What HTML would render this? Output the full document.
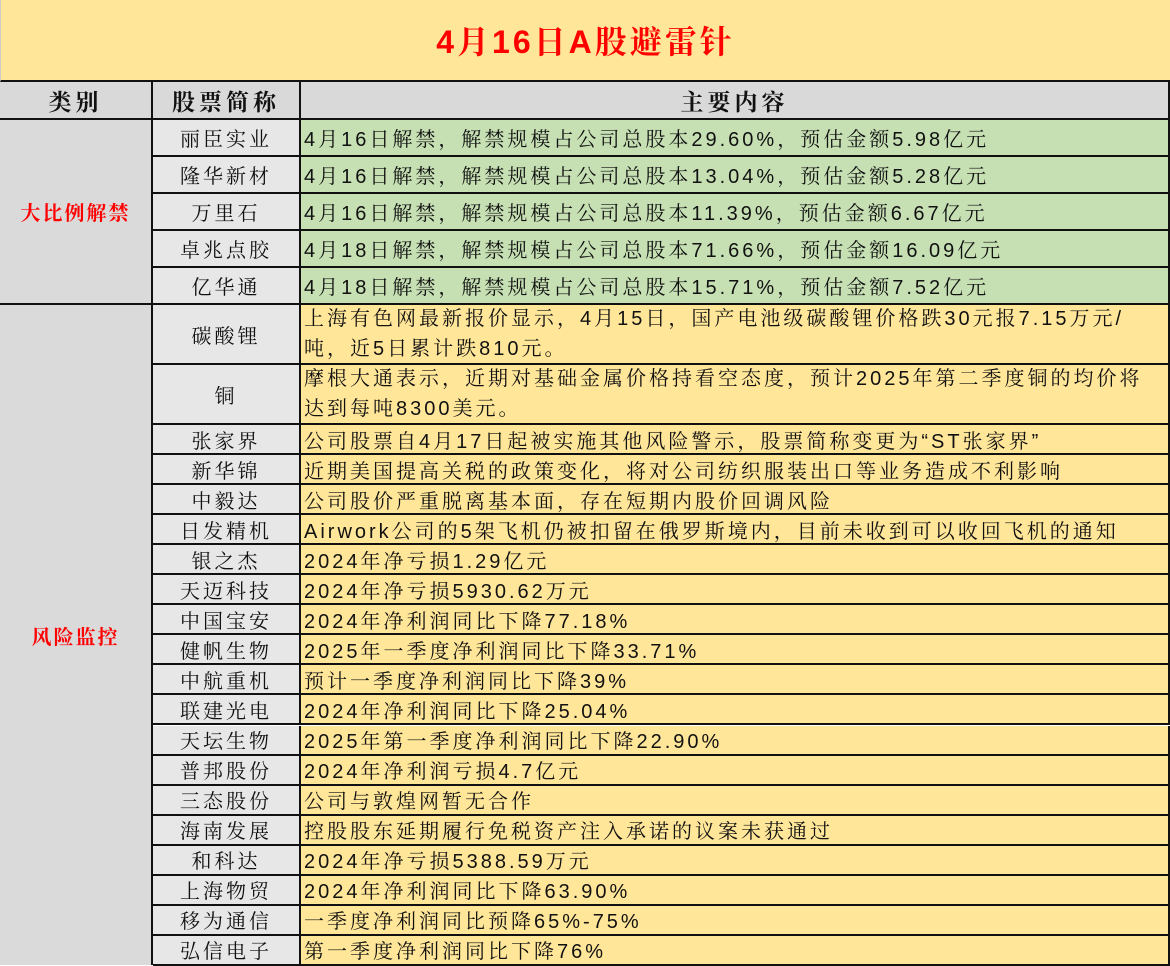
<!DOCTYPE html>
<html><head><meta charset="utf-8"><style>
*{margin:0;padding:0;box-sizing:border-box}
body{width:1170px;height:965px;background:#fff;position:relative;overflow:hidden;font-family:"Liberation Sans","Noto Serif CJK SC",serif;color:#111}
.c{position:absolute;border-right:2px solid #111;border-bottom:2px solid #111;display:flex;align-items:center;font-size:20px;white-space:nowrap}
.n{justify-content:center;background:#e7e7e7;letter-spacing:3px}
.t{padding-left:3px;letter-spacing:3px}
.g{background:#c6e0b4}.y{background:#ffe699}
.cat{justify-content:center;background:#dadada;color:#f00;font-weight:bold;letter-spacing:2px}
.h{justify-content:center;background:#d9d9d9;font-weight:bold;font-size:23px;letter-spacing:4px}
.w{white-space:normal;line-height:30px;align-items:center;word-break:break-all}
</style></head><body>
<div style="position:absolute;left:0;top:0;width:1170px;height:82px;background:#ffe699;border-bottom:2px solid #111;border-left:1px solid #ccc;display:flex;align-items:center;justify-content:center;color:#f00;font-weight:bold;font-size:32px;letter-spacing:3px">4月16日A股避雷针</div>
<div class="c h" style="left:0;top:82px;width:153px;height:38px">类别</div>
<div class="c h" style="left:153px;top:82px;width:148px;height:38px">股票简称</div>
<div class="c h" style="left:301px;top:82px;width:869px;height:38px">主要内容</div>
<div class="c cat" style="left:0;top:120px;width:153px;height:185px">大比例解禁</div>
<div class="c cat" style="left:0;top:305px;width:153px;height:660px;border-bottom:none">风险监控</div>
<div id="rows"></div>
<script>
var r=[
["丽臣实业","4月16日解禁，解禁规模占公司总股本29.60%，预估金额5.98亿元","g",120,37],
["隆华新材","4月16日解禁，解禁规模占公司总股本13.04%，预估金额5.28亿元","g",157,37],
["万里石","4月16日解禁，解禁规模占公司总股本11.39%，预估金额6.67亿元","g",194,37],
["卓兆点胶","4月18日解禁，解禁规模占公司总股本71.66%，预估金额16.09亿元","g",231,37],
["亿华通","4月18日解禁，解禁规模占公司总股本15.71%，预估金额7.52亿元","g",268,37],
["碳酸锂","上海有色网最新报价显示，4月15日，国产电池级碳酸锂价格跌30元报7.15万元/<br>吨，近5日累计跌810元。","y",305,60],
["铜","摩根大通表示，近期对基础金属价格持看空态度，预计2025年第二季度铜的均价将<br>达到每吨8300美元。","y",365,60]];
var s=[["张家界","公司股票自4月17日起被实施其他风险警示，股票简称变更为“ST张家界”"],
["新华锦","近期美国提高关税的政策变化，将对公司纺织服装出口等业务造成不利影响"],
["中毅达","公司股价严重脱离基本面，存在短期内股价回调风险"],
["日发精机","Airwork公司的5架飞机仍被扣留在俄罗斯境内，目前未收到可以收回飞机的通知"],
["银之杰","2024年净亏损1.29亿元"],["天迈科技","2024年净亏损5930.62万元"],
["中国宝安","2024年净利润同比下降77.18%"],["健帆生物","2025年一季度净利润同比下降33.71%"],
["中航重机","预计一季度净利润同比下降39%"],["联建光电","2024年净利润同比下降25.04%"],
["天坛生物","2025年第一季度净利润同比下降22.90%"],["普邦股份","2024年净利润亏损4.7亿元"],
["三态股份","公司与敦煌网暂无合作"],["海南发展","控股股东延期履行免税资产注入承诺的议案未获通过"],
["和科达","2024年净亏损5388.59万元"],["上海物贸","2024年净利润同比下降63.90%"],
["移为通信","一季度净利润同比预降65%-75%"],["弘信电子","第一季度净利润同比下降76%"]];
s.forEach(function(a,i){r.push([a[0],a[1],"y",425+i*30.05,30.05])});
var h="";
r.forEach(function(a){var tall=a[4]>40;
h+='<div class="c n" style="left:153px;top:'+a[3]+'px;width:148px;height:'+a[4]+'px">'+a[0]+'</div>';
h+='<div class="c t '+a[2]+(tall?' w':'')+'" style="left:301px;top:'+a[3]+'px;width:869px;height:'+a[4]+'px">'+(tall?'<div>'+a[1]+'</div>':a[1])+'</div>';});
document.getElementById("rows").innerHTML=h;
</script>
</body></html>
